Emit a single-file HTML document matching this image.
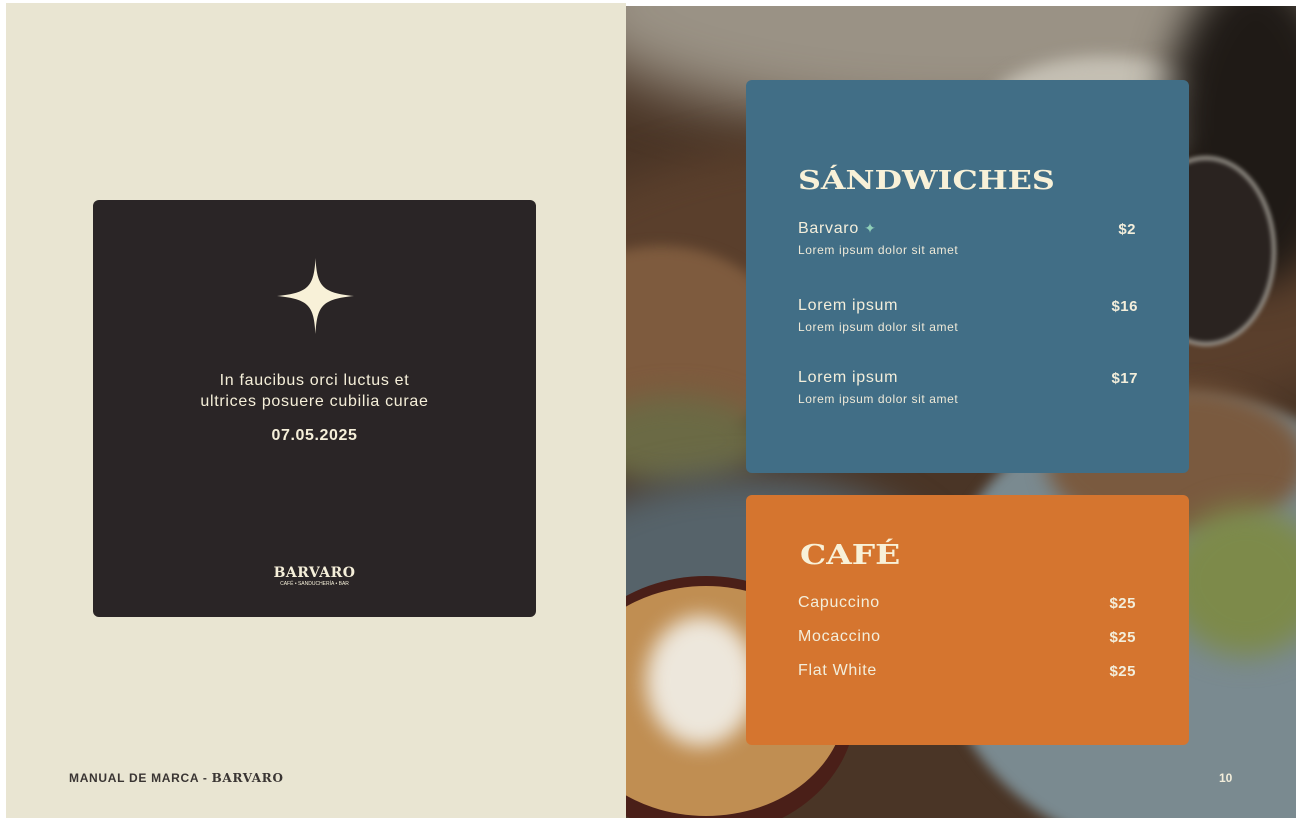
<!DOCTYPE html>
<html><head><meta charset="utf-8"><style>
*{margin:0;padding:0;box-sizing:border-box}
body{width:1298px;height:818px;background:#fff;position:relative;overflow:hidden;font-family:"Liberation Sans",sans-serif}
.a{position:absolute}
.left{left:6px;top:3px;width:620px;height:815px;background:#e9e5d2}
.photo{left:626px;top:6px;width:670px;height:812px;overflow:hidden;background:#4a3526}
.blob{position:absolute;border-radius:50%}
.card{left:93px;top:200px;width:443px;height:417px;background:#2a2526;border-radius:6px}
.cream{color:#f5efd9}
.title{font-family:"DejaVu Serif","Liberation Serif",serif;font-weight:bold;color:#f8f1d8;letter-spacing:0px;transform:scaleX(1.22);transform-origin:left}
.m{font-size:16px;color:#f3eedb;letter-spacing:.7px}
.s{font-size:12px;color:#eee9d8;letter-spacing:.6px}
.p{font-size:15px;font-weight:bold;color:#f3eedb;text-align:right;width:60px;letter-spacing:.5px}
</style></head><body>
<div class="a left"></div>
<div class="a card"></div>
<svg class="a" style="left:277px;top:258px" width="77" height="76" viewBox="0 0 77 76"><path d="M38.5 0 C40 28 45 35 77 38 C45 41 40 48 38.5 76 C37 48 32 41 0 38 C32 35 37 28 38.5 0Z" fill="#f8f1d8"/></svg>
<div class="a cream" style="left:93px;width:443px;top:370px;text-align:center;font-size:16px;line-height:21px;letter-spacing:.7px">In faucibus orci luctus et<br>ultrices posuere cubilia curae</div>
<div class="a cream" style="left:93px;width:443px;top:427px;text-align:center;font-size:16px;font-weight:bold;letter-spacing:.6px">07.05.2025</div>
<div class="a cream" style="left:93px;width:443px;top:565px;text-align:center;font-family:'DejaVu Serif',serif;font-weight:bold;font-size:14px;letter-spacing:.5px">BARVARO</div>
<div class="a cream" style="left:93px;width:443px;top:581px;text-align:center;font-size:5px">CAFÉ • SANDUCHERÍA • BAR</div>
<div class="a" style="left:69px;top:771px;font-size:12px;font-weight:bold;color:#3a3533;letter-spacing:.7px">MANUAL DE MARCA - <span style="font-family:'DejaVu Serif',serif">BARVARO</span></div>

<div class="a photo">
 <div class="blob" style="left:-60px;top:-120px;width:800px;height:240px;background:#9a9285;filter:blur(30px)"></div>
 <div class="blob" style="left:-100px;top:120px;width:900px;height:300px;background:#5a3f2c;filter:blur(20px)"></div>
 <div class="blob" style="left:360px;top:50px;width:240px;height:110px;background:#c4bfb3;filter:blur(8px)"></div>
 <div class="blob" style="left:540px;top:-40px;width:180px;height:320px;background:#1f1a16;filter:blur(20px)"></div>
 <div class="blob" style="left:510px;top:150px;width:140px;height:190px;background:#2a2320;border:4px solid #9a968e;filter:blur(2px)"></div>
 <div class="blob" style="left:-90px;top:240px;width:250px;height:200px;background:#7e5b3e;filter:blur(6px)"></div>
 <div class="blob" style="left:-40px;top:390px;width:180px;height:90px;background:#6b6a45;filter:blur(14px)"></div>
 <div class="blob" style="left:-80px;top:470px;width:400px;height:200px;background:#56636a;filter:blur(18px)"></div>
 <div class="blob" style="left:310px;top:390px;width:500px;height:460px;background:#7a8a90;filter:blur(6px)"></div>
 <div class="blob" style="left:420px;top:380px;width:260px;height:150px;background:#7a5a3f;filter:blur(10px)"></div>
 <div class="blob" style="left:540px;top:500px;width:160px;height:150px;background:#7d8a4a;filter:blur(14px)"></div>
 <div class="blob" style="left:-70px;top:570px;width:300px;height:260px;background:#4a1f18"></div>
 <div class="blob" style="left:-60px;top:580px;width:280px;height:230px;background:#c08e52"></div>
 <div class="blob" style="left:20px;top:610px;width:110px;height:130px;background:#ede7dc;filter:blur(10px)"></div>
</div>

<div class="a" style="left:746px;top:80px;width:443px;height:393px;background:#416e86;border-radius:6px"></div>
<div class="a title" style="left:798px;top:166px;font-size:26px">SÁNDWICHES</div>
<div class="a m" style="left:798px;top:220px">Barvaro <span style="color:#8fcfb8;font-size:14px">✦</span></div>
<div class="a s" style="left:798px;top:243px">Lorem ipsum dolor sit amet</div>
<div class="a p" style="left:1076px;top:221px">$2</div>
<div class="a m" style="left:798px;top:297px">Lorem ipsum</div>
<div class="a s" style="left:798px;top:320px">Lorem ipsum dolor sit amet</div>
<div class="a p" style="left:1078px;top:298px">$16</div>
<div class="a m" style="left:798px;top:369px">Lorem ipsum</div>
<div class="a s" style="left:798px;top:392px">Lorem ipsum dolor sit amet</div>
<div class="a p" style="left:1078px;top:370px">$17</div>

<div class="a" style="left:746px;top:495px;width:443px;height:250px;background:#d5752f;border-radius:6px"></div>
<div class="a title" style="left:800px;top:540px;font-size:27px">CAFÉ</div>
<div class="a m" style="left:798px;top:594px">Capuccino</div>
<div class="a p" style="left:1076px;top:595px">$25</div>
<div class="a m" style="left:798px;top:628px">Mocaccino</div>
<div class="a p" style="left:1076px;top:629px">$25</div>
<div class="a m" style="left:798px;top:662px">Flat White</div>
<div class="a p" style="left:1076px;top:663px">$25</div>
<div class="a" style="left:1219px;top:771px;font-size:12px;font-weight:bold;color:#f3eedb">10</div>
</body></html>
